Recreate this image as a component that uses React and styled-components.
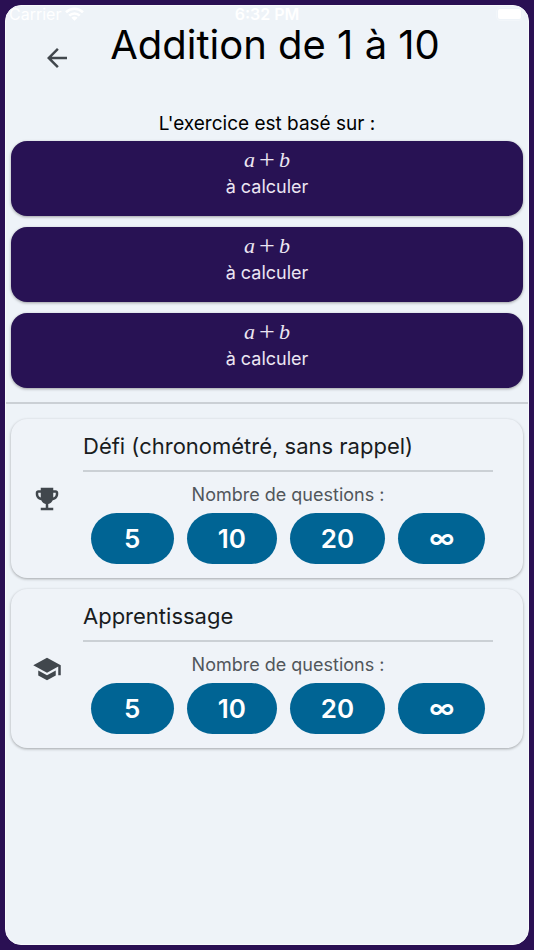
import React from 'react';
import styled, { createGlobalStyle } from 'styled-components';

const GlobalStyle = createGlobalStyle`
  * {
    box-sizing: border-box;
  }

  body {
    margin: 0;
    background: #2a1053;
    font-family: Inter, Roboto, sans-serif;
    color: #191c1e;
  }
`;

const Page = styled.div`
  min-height: 100vh;
  padding: 5px;
  display: flex;
`;

const Screen = styled.main`
  flex: 1;
  min-width: 0;
  background: #eef3f8;
  border: 1px solid #f8fafc;
  border-radius: 16px;
`;

const StatusBar = styled.div`
  display: grid;
  grid-template-columns: 1fr auto 1fr;
  align-items: center;
  height: 16px;
  padding: 0 3px;
  color: #fff;
  font-size: 16px;
  line-height: 16px;
`;

const Carrier = styled.span`
  display: flex;
  align-items: center;
  gap: 4px;
`;

const Clock = styled.span`
  font-weight: 600;
`;

const Battery = styled.svg`
  justify-self: end;
`;

const Header = styled.header`
  display: grid;
  grid-template-columns: 80px 1fr 64px;
  height: 84px;
`;

const BackButton = styled.button`
  align-self: start;
  justify-self: end;
  width: 44px;
  height: 44px;
  margin: 14px 7px 0 0;
  padding: 7px;
  border: 0;
  background: none;
  color: #41474d;
  cursor: pointer;

  svg {
    display: block;
  }
`;

const Title = styled.h1`
  margin: 0;
  color: #000;
  font-size: 40px;
  font-weight: 400;
  line-height: 46px;
  text-align: center;
  white-space: nowrap;
`;

const Intro = styled.p`
  margin: 0;
  padding: 4px 0;
  color: #000;
  font-size: 19px;
  line-height: 27px;
  text-align: center;
`;

const CardList = styled.section`
  display: flex;
  flex-direction: column;
  gap: 11px;
  padding: 0 5px;
`;

const FormulaCard = styled.div`
  height: 75px;
  padding-top: 5px;
  border-radius: 16px;
  background: #281254;
  box-shadow: 0 1px 3px rgba(0, 0, 0, 0.35);
  color: #ece6f2;
  font-size: 18px;
  line-height: 28px;
  text-align: center;
`;

const Formula = styled.div`
  display: flex;
  justify-content: center;
  gap: 4px;
  height: 27px;
  font-family: 'Liberation Serif', serif;
  font-size: 22px;
  line-height: 27px;
`;

const Operator = styled.span`
  font-size: 28px;
`;

const Separator = styled.hr`
  height: 2px;
  margin: 14px 0 15px;
  border: 0;
  background: #cbd0d5;
`;

const ModeCard = styled.article`
  display: grid;
  grid-template-columns: 72px 1fr;
  align-items: center;
  height: 159px;
  padding-right: 30px;
  border-radius: 16px;
  background: #eff3f8;
  box-shadow: 0 1px 3px rgba(0, 0, 0, 0.32);
`;

const ModeIcon = styled.svg`
  justify-self: center;
  color: #41474d;
`;

const ModeTitle = styled.h2`
  margin: 0;
  padding-bottom: 11px;
  border-bottom: 2px solid #cbd0d5;
  font-size: 22px;
  font-weight: 400;
  line-height: 26px;
  white-space: nowrap;
`;

const Question = styled.p`
  margin: 8px 0 3px;
  color: #51565b;
  font-size: 18px;
  line-height: 30px;
  text-align: center;
`;

const Choices = styled.div`
  display: flex;
  justify-content: center;
  gap: 13px;
`;

const Choice = styled.button`
  min-width: 83px;
  height: 51px;
  padding: 0 31px;
  border: 0;
  border-radius: 26px;
  background: #006494;
  color: #fff;
  font-family: inherit;
  font-size: 26px;
  font-weight: 600;
  cursor: pointer;
`;

const counts = ['5', '10', '20', '∞'];

const modes = [
  {
    title: 'Défi (chronométré, sans rappel)',
    icon: 'M19 5h-2V3H7v2H5c-1.1 0-2 .9-2 2v1c0 2.55 1.92 4.63 4.39 4.94.63 1.5 1.98 2.63 3.61 2.96V19H7v2h10v-2h-4v-3.1c1.63-.33 2.98-1.46 3.61-2.96C19.08 12.63 21 10.55 21 8V7c0-1.1-.9-2-2-2zM5 8V7h2v3.82C5.84 10.4 5 9.3 5 8zm14 0c0 1.3-.84 2.4-2 2.82V7h2v1z',
  },
  {
    title: 'Apprentissage',
    icon: 'M5 13.18v4L12 21l7-3.82v-4L12 17l-7-3.82zM12 3 1 9l11 6 9-4.91V17h2V9L12 3z',
  },
];

const Mode = ({ title, icon }) => (
  <ModeCard>
    <ModeIcon width="30" height="30" viewBox="0 0 24 24" aria-hidden="true">
      <path fill="currentColor" d={icon} />
    </ModeIcon>
    <div>
      <ModeTitle>{title}</ModeTitle>
      <Question>Nombre de questions :</Question>
      <Choices>
        {counts.map((count) => (
          <Choice key={count} type="button">{count}</Choice>
        ))}
      </Choices>
    </div>
  </ModeCard>
);

const App = () => {
  return (
    <>
      <GlobalStyle />
      <Page>
        <Screen>
          <StatusBar>
            <Carrier>
              Carrier
              <svg width="19" height="14" viewBox="0 0 19 14" aria-hidden="true">
                <g fill="none" stroke="#fff" strokeWidth="2.6">
                  <path d="M1 5.2a12.2 12.2 0 0 1 17 0" />
                  <path d="M4.2 8.6a7.6 7.6 0 0 1 10.6 0" />
                </g>
                <path fill="#fff" d="M9.5 13.8 6.4 10.8a4.4 4.4 0 0 1 6.2 0z" />
              </svg>
            </Carrier>
            <Clock>6:32 PM</Clock>
            <Battery width="30" height="14" viewBox="0 0 30 14" aria-hidden="true">
              <rect x="1.5" y="0.5" width="26" height="13" rx="3.5" fill="none" stroke="#f2f6fa" />
              <rect x="3" y="2" width="23" height="10" rx="2" fill="#fff" />
              <path d="M28.5 5v4" stroke="#f2f6fa" />
            </Battery>
          </StatusBar>

          <Header>
            <BackButton type="button" aria-label="Retour">
              <svg width="30" height="30" viewBox="0 0 24 24" aria-hidden="true">
                <path fill="currentColor" d="M20 11H7.83l5.59-5.59L12 4l-8 8 8 8 1.41-1.41L7.83 13H20v-2z" />
              </svg>
            </BackButton>
            <Title>Addition de 1 à 10</Title>
          </Header>

          <Intro>L'exercice est basé sur :</Intro>
          <CardList>
            {[1, 2, 3].map((id) => (
              <FormulaCard key={id}>
                <Formula>
                  <i>a</i>
                  <Operator>+</Operator>
                  <i>b</i>
                </Formula>
                à calculer
              </FormulaCard>
            ))}
          </CardList>

          <Separator />

          <CardList>
            {modes.map((mode) => (
              <Mode key={mode.title} {...mode} />
            ))}
          </CardList>
        </Screen>
      </Page>
    </>
  );
};

export default App;
